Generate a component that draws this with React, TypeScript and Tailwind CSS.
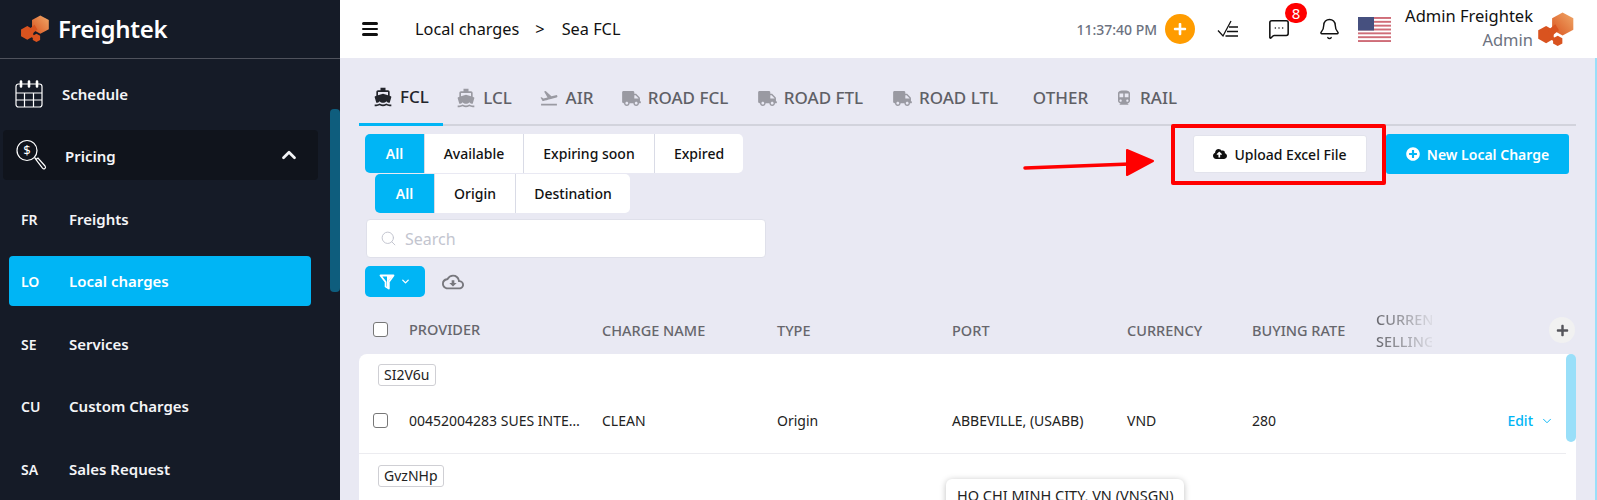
import React from "react";
import { ChevronUp, ChevronDown, Search, MessageSquareMore, Bell } from "lucide-react";
import { FaTruck, FaCloudUploadAlt, FaPlusCircle, FaPlus } from "react-icons/fa";
import { MdDirectionsBoat, MdFlightTakeoff, MdDirectionsTransit, MdOutlineCloudDownload } from "react-icons/md";

function Logo({ className, id }: { className?: string; id: string }) {
  return (
    <svg viewBox="0 0 32 28" className={className}>
      <defs>
        <linearGradient id={id} x1="0" y1="1" x2="1" y2="0">
          <stop offset="0" stopColor="#d9541f" />
          <stop offset="1" stopColor="#f0a868" />
        </linearGradient>
      </defs>
      <path d="M21 .5l8.8 4.6v9.600L21 19.400l-8.600-4.700V5.100z" fill={`url(#${id})`} />
      <path d="M7.500 11.500l6.200 3.500v7l-6.200 3.600L1 22v-7z" fill="#d9531f" />
      <path d="M17 19.500l3.800 2.100v4.200L17 28l-3.800-2.200v-4.200z" fill="#d9531f" />
      <path d="M9 15l6-5 3 5-6 5zM12 20l4 2-2 2-4-2z" fill="#d9531f" />
    </svg>
  );
}

function CalendarIcon() {
  return (
    <svg viewBox="0 0 28 28" className="w-[28px] h-[28px] text-white" fill="none" stroke="currentColor" strokeWidth="1.2">
      <rect x="1" y="4" width="26" height="23" rx="2.500" />
      <path d="M1 13h26M1 20h26M9.500 13v14M18.500 13v14" />
      <path d="M6 1.500v5M14 1.500v5M22 1.500v5" strokeWidth="2.600" strokeLinecap="round" />
    </svg>
  );
}

function PricingIcon() {
  return (
    <svg viewBox="0 0 32 32" className="w-[32px] h-[32px]" fill="none" stroke="#fff" strokeWidth="1.2">
      <circle cx="12" cy="11.500" r="10" />
      <path d="M19.500 18.500l2 2" />
      <path d="M21 20.500l2-1.500 7 8c.8 1 .6 2-.2 2.600-.8.600-1.600.4-2.300-.4z" />
      <text x="12" y="16" textAnchor="middle" fontSize="13" fill="#fff" stroke="none" fontFamily="'Noto Sans', sans-serif">$</text>
    </svg>
  );
}

function TaskIcon() {
  return (
    <svg viewBox="0 0 22 18" className="w-[22px] h-[18px]" fill="none" stroke="#111" strokeWidth="1.3">
      <path d="M1 10.500l5 5.500L14 1" />
      <path d="M12 7h9M10 11.500h11M8.500 16h12.500" />
    </svg>
  );
}

function FilterIcon() {
  return (
    <svg viewBox="0 0 16 16" className="w-[16px] h-[16px]" fill="none" stroke="#fff" strokeWidth="1.800" strokeLinejoin="round">
      <path d="M1.500 1.500h13L9.800 8v6.500l-3.200-2V8z" />
      <path d="M8 2h5.500L9 7.500V14L8 13z" fill="#fff" stroke="none" />
    </svg>
  );
}

function Flag() {
  const stripes = [0, 2, 4, 6, 8, 10, 12];
  return (
    <svg viewBox="0 0 33 25" className="w-[33px] h-[25px]">
      <rect width="33" height="25" fill="#fff" />
      {stripes.map((s) => (
        <rect key={s} y={(s * 25) / 13} width="33" height={25 / 13} fill="#cf6d78" />
      ))}
      <rect width="16" height="13.500" fill="#46507f" />
    </svg>
  );
}

const side = [
  ["FR", "Freights", false],
  ["LO", "Local charges", true],
  ["SE", "Services", false],
  ["CU", "Custom Charges", false],
  ["SA", "Sales Request", false],
] as const;

const tabs = [
  { t: "FCL", i: <MdDirectionsBoat className="w-[20px] h-[20px] text-[#23252b]" />, active: true, w: "w-[84px]" },
  { t: "LCL", i: <MdDirectionsBoat className="w-[20px] h-[20px]" />, w: "w-[82px]" },
  { t: "AIR", i: <MdFlightTakeoff className="w-[20px] h-[20px]" />, w: "w-[82px]" },
  { t: "ROAD FCL", i: <FaTruck className="w-[19px] h-[15px]" />, w: "w-[136px]" },
  { t: "ROAD FTL", i: <FaTruck className="w-[19px] h-[15px]" />, w: "w-[135px]" },
  { t: "ROAD LTL", i: <FaTruck className="w-[19px] h-[15px]" />, w: "w-[135px]" },
  { t: "OTHER", i: null, w: "w-[88px]" },
  { t: "RAIL", i: <MdDirectionsTransit className="w-[18px] h-[20px]" />, w: "w-[90px]" },
];

function Seg({ items, widths }: { items: string[]; widths: string[] }) {
  return (
    <div className="flex w-fit">
      {items.map((x, i) => (
        <div
          key={x}
          className={
            i === 0
              ? `${widths[i]} h-[39px] flex items-center justify-center bg-[#00b5f5] text-white font-semibold text-[14px] rounded-l-[5px]`
              : `${widths[i]} h-[39px] flex items-center justify-center bg-white text-[#111] font-medium text-[14px] border-l border-[#d9dbe6] ${i === items.length - 1 ? "rounded-r-[5px]" : ""}`
          }
        >
          {x}
        </div>
      ))}
    </div>
  );
}

const columns = "grid grid-cols-[36px_193px_175px_175px_175px_125px_124px_1fr] items-center";

export default function App() {
  return (
    <div className="relative flex w-[1597px] h-[500px] overflow-hidden bg-[#e9e9f3] font-['Noto_Sans','Open_Sans',sans-serif]">
      <aside className="relative w-[340px] shrink-0 bg-[#151b27] text-[#f4f5f7]">
        <div className="h-[59px] border-b border-[#4f525c] pl-[20px] flex items-center gap-[7px]">
          <Logo id="g1" className="w-[31px] h-[27px] -mt-[1px]" />
          <span className="text-[24px] font-semibold text-white leading-none tracking-[-0.3px]">Freightek</span>
        </div>
        <div className="flex items-center h-[50px] mt-[10px] pl-[15px]">
          <CalendarIcon />
          <span className="ml-[19px] text-[15px] font-semibold">Schedule</span>
        </div>
        <div className="flex items-center h-[50px] mt-[11px] ml-[3px] w-[315px] bg-[#10141c] rounded-[4px] pl-[12px] pr-[18px]">
          <PricingIcon />
          <span className="ml-[18px] pt-[2px] text-[15px] font-semibold flex-1">Pricing</span>
          <ChevronUp className="w-[22px] h-[22px]" strokeWidth={3} />
        </div>
        <div className="flex flex-col gap-[12.500px] mt-[13px]">
          {side.map(([a, b, on]) => (
            <div
              key={a}
              className={`flex items-center h-[50px] ml-[9px] w-[302px] pl-[12px] pt-[2px] rounded-[4px] font-semibold text-[14px] ${on ? "bg-[#00b5f5] text-white" : ""}`}
            >
              <span className="w-[48px]">{a}</span>
              <span className="text-[15px]">{b}</span>
            </div>
          ))}
        </div>
        <div className="absolute right-0 top-[109px] w-[10px] h-[183px] bg-[#0e5d7d] rounded-[4px]" />
      </aside>

      <main className="flex-1 min-w-0 relative flex flex-col">
        <header className="h-[58px] shrink-0 bg-white flex items-center text-[#111]">
          <div className="ml-[22px] flex flex-col gap-[3px] w-[16px]">
            <span className="h-[2.500px] bg-[#111] rounded" />
            <span className="h-[2.500px] bg-[#111] rounded" />
            <span className="h-[2.500px] bg-[#111] rounded" />
          </div>
          <span className="ml-[37px] text-[16.300px]">Local charges</span>
          <span className="ml-[16px] text-[16.300px]">&gt;</span>
          <span className="ml-[17px] text-[16.300px]">Sea FCL</span>
          <span className="ml-auto text-[14px] text-[#6c7280] font-medium">11:37:40 PM</span>
          <span className="ml-[8px] w-[30px] h-[30px] rounded-full bg-[#ff9c00] flex items-center justify-center">
            <FaPlus className="w-[14px] h-[14px] text-white" />
          </span>
          <span className="ml-[22px]"><TaskIcon /></span>
          <span className="relative ml-[29px]">
            <MessageSquareMore className="w-[22px] h-[22px]" strokeWidth={1.700} />
            <span className="absolute -top-[15px] left-[17px] w-[22px] h-[20px] rounded-full bg-[#f00] text-white text-[15px] flex items-center justify-center">8</span>
          </span>
          <span className="ml-[28px]"><Bell className="w-[23px] h-[24px]" strokeWidth={1.500} /></span>
          <span className="ml-[17px]"><Flag /></span>
          <div className="ml-[14px] flex flex-col items-end leading-none -mt-[2px]">
            <span className="text-[16.500px]">Admin Freightek</span>
            <span className="text-[16.500px] text-[#6c7280] mt-[8px]">Admin</span>
          </div>
          <span className="ml-[4px] mr-[21px]"><Logo id="g2" className="w-[39px] h-[36px]" /></span>
        </header>

        <nav className="ml-[19px] mr-[21px] h-[68px] shrink-0 border-b-2 border-[#d2d3dc] flex text-[#5f6066]">
          {tabs.map((t) => (
            <div
              key={t.t}
              className={`${t.w} h-[68px] flex items-center justify-center gap-[7px] pt-[12px] text-[17px] font-medium ${t.active ? "border-b-[3px] border-[#00b5f5] text-[#23252b]" : ""}`}
            >
              <span className={t.active ? "" : "text-[#9a9aa2]"}>{t.i}</span>
              <span>{t.t}</span>
            </div>
          ))}
        </nav>

        <section className="flex justify-between pl-[25px] pr-[28px] mt-[8px]">
          <div>
            <Seg items={["All", "Available", "Expiring soon", "Expired"]} widths={["w-[59px]", "w-[99px]", "w-[131px]", "w-[89px]"]} />
            <div className="ml-[10px] mt-[1px]">
              <Seg items={["All", "Origin", "Destination"]} widths={["w-[59px]", "w-[81px]", "w-[115px]"]} />
            </div>
          </div>
          <div className="flex gap-[19px] h-[40px]">
            <button className="w-[174px] h-[38px] mt-[1px] bg-white rounded-[3px] border border-[#e2e3ec] flex items-center justify-center gap-[7px] text-[14px] font-medium text-[#111]">
              <FaCloudUploadAlt className="w-[14px] h-[14px]" />
              Upload Excel File
            </button>
            <button className="w-[183px] h-[40px] bg-[#00b5f5] rounded-[3px] flex items-center justify-center gap-[7px] text-[14px] font-semibold text-white">
              <FaPlusCircle className="w-[14px] h-[14px]" />
              New Local Charge
            </button>
          </div>
        </section>

        <div className="ml-[26px] mt-[6px] w-[400px] h-[39px] bg-white rounded-[4px] border border-[#dfe0ea] flex items-center pl-[13px] gap-[8px] text-[16px] text-[#c3c5cf]">
          <Search className="w-[17px] h-[17px]" strokeWidth={1.400} />
          Search
        </div>

        <div className="ml-[25px] mt-[8px] flex items-center">
          <div className="w-[60px] h-[31px] rounded-[5px] bg-[#00b5f5] flex items-center justify-center gap-[5px] text-white">
            <FilterIcon />
            <ChevronDown className="w-[11px] h-[11px]" strokeWidth={3} />
          </div>
          <MdOutlineCloudDownload className="ml-[17px] w-[22px] h-[22px] text-[#77777d]" />
        </div>

        <div className={`${columns} ml-[33px] mr-[21px] mt-[3px] h-[54px] pt-[8px] shrink-0 text-[14.500px] font-medium text-[#66666c]`}>
          <span className="w-[15px] h-[15px] rounded-[3px] border border-[#777] bg-white -mt-[3px]" />
          <span className="-mt-[3px]">PROVIDER</span>
          <span>CHARGE NAME</span>
          <span>TYPE</span>
          <span>PORT</span>
          <span>CURRENCY</span>
          <span>BUYING RATE</span>
          <span className="w-[56px] overflow-hidden whitespace-nowrap leading-[22px] -mt-[2px] bg-gradient-to-r from-[#66666c] to-[#dcdce4] bg-clip-text text-transparent">
            CURRENCY
            <br />
            SELLING RATE
          </span>
        </div>

        <div className="relative ml-[19px] mr-[21px] flex-1 bg-white rounded-t-[8px] text-[14px] text-[#222]">
          <div className="h-[100px] mr-[10px] border-b border-[#ececf0] pt-[10px] pl-[19px]">
            <span className="inline-block h-[22px] leading-[20px] px-[5px] border border-[#cfcfd4] rounded-[3px]">SI2V6u</span>
            <div className={`${columns} -ml-[5px] mt-[24px]`}>
              <span className="w-[15px] h-[15px] rounded-[3px] border border-[#777] bg-white" />
              <span className="truncate w-[175px]">00452004283 SUES INTERNATIONAL</span>
              <span>CLEAN</span>
              <span>Origin</span>
              <span>ABBEVILLE, (USABB)</span>
              <span>VND</span>
              <span>280</span>
              <span className="justify-self-end flex items-center gap-[7px] text-[#00b5f5] mr-[12px] font-medium">
                Edit <ChevronDown className="w-[14px] h-[14px]" strokeWidth={1.600} />
              </span>
            </div>
          </div>
          <div className="pt-[11px] pl-[19px]">
            <span className="inline-block h-[22px] leading-[20px] px-[5px] border border-[#cfcfd4] rounded-[3px]">GvzNHp</span>
          </div>
          <div className="absolute right-0 top-0 w-[10px] h-[88px] rounded-[5px] bg-[#99dff9]" />
          <div className="absolute left-[587px] top-[125px] w-[238px] h-[40px] bg-white rounded-[6px] shadow-[0_1px_6px_rgba(0,0,0,0.25)] pl-[11px] pt-[6px] text-[14.500px] text-[#222] whitespace-nowrap">
            HO CHI MINH CITY, VN (VNSGN)
          </div>
        </div>

        <div className="absolute right-0 top-[58px] bottom-0 w-[2px] bg-[#99dff9]" />
        <div className="absolute left-[831px] top-[124px] w-[215px] h-[61px] border-[4px] border-[#f00] rounded-[2px]" />
        <svg className="absolute left-[682px] top-[145px] w-[140px] h-[36px]" viewBox="0 0 140 36">
          <path d="M3 23L108 19" stroke="#f00" strokeWidth="3.500" strokeLinecap="round" />
          <path d="M105 5L131 16L105 30z" fill="#f00" stroke="#f00" strokeWidth="2" strokeLinejoin="round" />
        </svg>
        <span className="absolute left-[1209px] top-[317px] w-[26px] h-[26px] rounded-full bg-[#f1f1f1] flex items-center justify-center">
          <FaPlus className="w-[13px] h-[13px] text-[#55555b]" />
        </span>
      </main>
    </div>
  );
}
